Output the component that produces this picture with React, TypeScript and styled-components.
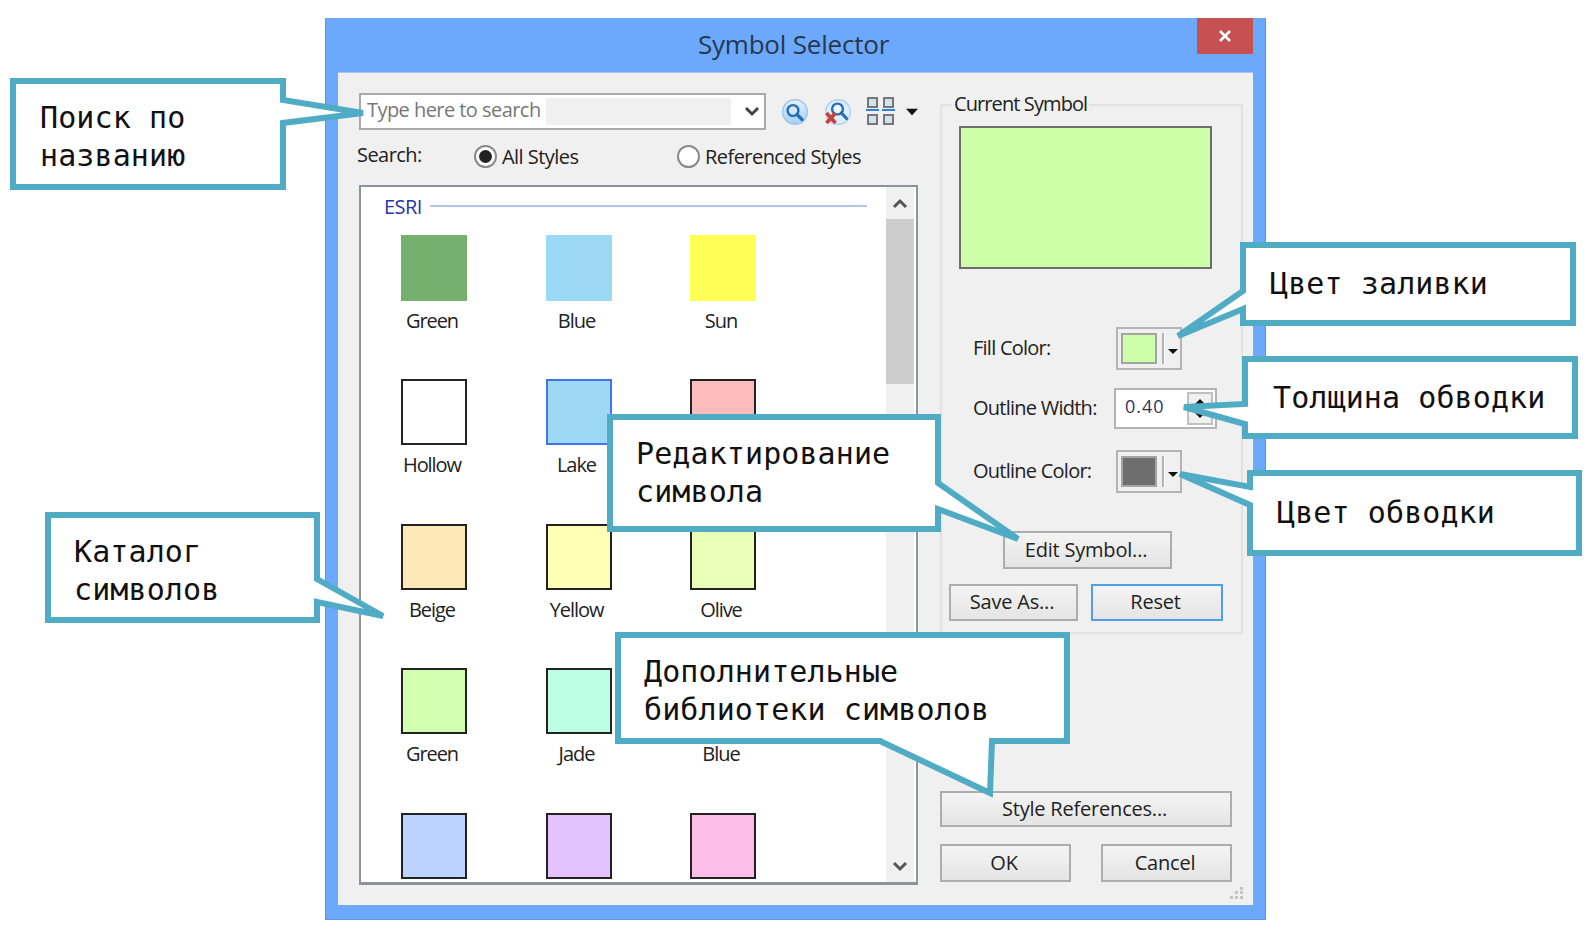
import React from 'react';
import styled, { createGlobalStyle } from 'styled-components';

const GlobalStyle = createGlobalStyle`
  html, body {
    margin: 0;
    padding: 0;
    background: #fff;
    overflow: hidden;
  }
  * {
    box-sizing: border-box;
  }
`;

const UI_FONT = `"Open Sans", "Liberation Sans", sans-serif`;
const TEAL = '#50abc5';

const Page = styled.div`
  position: relative;
  width: 1596px;
  height: 938px;
  padding: 18px 0 0 325px;
  background: #fff;
  font-family: ${UI_FONT};
  font-size: 20px;
  letter-spacing: -0.55px;
  color: #222;
`;

const Win = styled.div`
  width: 941px;
  height: 902px;
  display: flex;
  flex-direction: column;
  background: #6ca8fb;
  border: 1px solid #5f94dc;
  border-top: 0;
`;

const TitleBar = styled.div`
  position: relative;
  height: 54px;
  flex: none;
  padding: 8px 4px 0 0;
  text-align: center;
  font-size: 26px;
  line-height: 36px;
  letter-spacing: -0.2px;
  color: #26384f;
`;

const CloseBtn = styled.div`
  position: absolute;
  top: 0;
  right: 12px;
  width: 56px;
  height: 36px;
  display: flex;
  align-items: center;
  justify-content: center;
  background: #c75050;
`;

const Panel = styled.div`
  position: relative;
  flex: 1;
  min-height: 0;
  margin: 0 12px 14px 12px;
  padding: 20px 0 20px 21px;
  display: flex;
  gap: 22px;
  background: #f0f0f0;
  border-top: 1px solid #a9c4ea;
`;

const LeftCol = styled.div`
  width: 559px;
  min-height: 0;
  display: flex;
  flex-direction: column;
`;

const RightCol = styled.div`
  width: 295px;
  min-height: 0;
  display: flex;
  flex-direction: column;
`;

const SearchRow = styled.div`
  height: 37px;
  flex: none;
  display: flex;
  align-items: center;
`;

const Combo = styled.div`
  width: 407px;
  height: 37px;
  flex: none;
  display: flex;
  align-items: center;
  padding: 3px 0 3px 3px;
  background: #fff;
  border: 2px solid #a9a9a9;
  margin-right: 16px;
  color: #777;
`;

const ComboText = styled.div`
  width: 182px;
  height: 100%;
  padding-left: 3px;
  line-height: 24px;
  white-space: nowrap;
`;

const ComboFill = styled.div`
  width: 185px;
  height: 100%;
  background: #f0f0f0;
`;

const ComboArrow = styled.div`
  flex: 1;
  display: flex;
  justify-content: center;
  padding-left: 8px;
`;

const ToolIcon = styled.div<{ $gap: number }>`
  display: flex;
  margin-right: ${(p) => p.$gap}px;
`;

const RadioRow = styled.div`
  height: 55px;
  flex: none;
  padding-bottom: 2px;
  display: flex;
  align-items: center;
`;

const SearchLabel = styled.div`
  width: 117px;
  margin-left: -2px;
  margin-top: -4px;
`;

const RadioItem = styled.div<{ $width: number }>`
  width: ${(p) => p.$width}px;
  flex: none;
  display: flex;
  align-items: center;
  gap: 5px;
  white-space: nowrap;
`;

const RadioDot = styled.div<{ $on?: boolean }>`
  width: 23px;
  height: 23px;
  flex: none;
  display: flex;
  align-items: center;
  justify-content: center;
  border-radius: 50%;
  background: #fff;
  border: 2px solid #8a8a8a;
  &::after {
    content: '';
    width: 13px;
    height: 13px;
    border-radius: 50%;
    background: ${(p) => (p.$on ? '#222' : 'transparent')};
  }
`;

const ListBox = styled.div`
  flex: 1;
  min-height: 0;
  display: flex;
  overflow: hidden;
  background: #fff;
  border: 2px solid #8d929c;
  border-bottom-width: 3px;
`;

const ListBody = styled.div`
  flex: 1;
  overflow: hidden;
`;

const GroupHead = styled.div`
  height: 38px;
  display: flex;
  align-items: center;
  gap: 8px;
  padding: 0 19px 0 23px;
  color: #2436a8;
`;

const GroupRule = styled.div`
  flex: 1;
  height: 2px;
  background: #b5c4ef;
`;

const SymbolGrid = styled.div`
  display: grid;
  grid-template-columns: repeat(3, 144.5px);
  grid-auto-rows: 144.5px;
  padding: 9.5px 0 0 40px;
`;

const SymbolCell = styled.div`
  width: 66px;
  display: flex;
  flex-direction: column;
  align-items: center;
`;

const Swatch = styled.div<{ $fill: string; $edge: string }>`
  width: 66px;
  height: 66px;
  flex: none;
  background: ${(p) => p.$fill};
  border: 2px solid ${(p) => p.$edge};
`;

const SymbolName = styled.div`
  margin: 7px 4px 0 0;
  line-height: 25px;
  letter-spacing: -1.05px;
  white-space: nowrap;
`;

const ScrollBar = styled.div`
  width: 28px;
  flex: none;
  margin-right: 2px;
  display: flex;
  flex-direction: column;
  background: #f0f0f0;
`;

const ScrollArrow = styled.div`
  height: 32px;
  flex: none;
  display: flex;
  align-items: center;
  justify-content: center;
`;

const ScrollThumb = styled.div`
  height: 165px;
  flex: none;
  background: #cdcdcd;
`;

const ScrollTrack = styled.div`
  flex: 1;
`;

const Group = styled.fieldset`
  margin: 0;
  width: 295px;
  height: 541px;
  flex: none;
  padding: 9px 18px 11px 17px;
  display: flex;
  flex-direction: column;
  border: 2px solid #e2e2e2;
  legend {
    margin-left: -7px;
    padding: 0 2px;
    height: 24px;
    line-height: 22px;
    letter-spacing: -0.9px;
  }
`;

const Preview = styled.div`
  width: 253px;
  height: 143px;
  flex: none;
  background: #ccffa8;
  border: 2px solid #6e6e6e;
`;

const FormRow = styled.div<{ $top: number }>`
  display: flex;
  align-items: center;
  margin-top: ${(p) => p.$top}px;
  padding-left: 14px;
`;

const FormLabel = styled.div`
  width: 141px;
  flex: none;
  margin-top: -2px;
  letter-spacing: -0.75px;
`;

const ColorPicker = styled.div`
  width: 66px;
  height: 43px;
  margin-left: 2px;
  display: flex;
  align-items: center;
  padding-left: 3px;
  background: #f0f0f0;
  border: 2px solid #b4b4b4;
`;

const ColorChip = styled.div<{ $fill: string }>`
  width: 36px;
  height: 31px;
  background: ${(p) => p.$fill};
  border: 2px solid #a4a4a4;
`;

const ChipDivider = styled.div`
  width: 3px;
  height: 31px;
  margin-left: 5px;
  background: #b4b4b4;
  border-right: 1px solid #fff;
`;

const ChipCaret = styled.div`
  flex: 1;
  display: flex;
  justify-content: center;
  padding-top: 6px;
`;

const SpinInput = styled.div`
  width: 103px;
  height: 41px;
  display: flex;
  align-items: center;
  padding: 0 2px 0 9px;
  background: #fff;
  border: 2px solid #b4b4b4;
`;

const SpinValue = styled.div`
  flex: 1;
  margin-top: -6px;
  font-size: 18px;
  letter-spacing: 1px;
  color: #33335a;
`;

const SpinButtons = styled.div`
  width: 26px;
  height: 33px;
  display: flex;
  flex-direction: column;
  align-items: center;
  justify-content: space-between;
  padding: 5px 0;
  background: #f0f0f0;
  border: 2px solid #c0c0c0;
`;

const Btn = styled.div<{ $w: number; $h: number; $blue?: boolean }>`
  width: ${(p) => p.$w}px;
  height: ${(p) => p.$h}px;
  flex: none;
  display: flex;
  align-items: center;
  justify-content: center;
  background: linear-gradient(#f4f4f4, #e4e4e4);
  border: 2px solid ${(p) => (p.$blue ? '#4f9ee8' : '#adadad')};
  padding: 0 3px 2px 0;
  letter-spacing: -0.2px;
`;

const EditWrap = styled.div`
  margin: 38px 0 0 44px;
`;

const ActionRow = styled.div`
  display: flex;
  justify-content: space-between;
  width: 274px;
  margin: 15px 0 0 -10px;
`;

const BottomButtons = styled.div`
  margin-top: auto;
  margin-bottom: 3px;
  width: 292px;
  display: flex;
  flex-direction: column;
  gap: 17px;
`;

const OkRow = styled.div`
  display: flex;
  justify-content: space-between;
`;

const Grip = styled.svg`
  position: absolute;
  right: 9px;
  bottom: 5px;
`;

const Callout = styled.div<{ $x: number; $y: number; $w: number; $h: number; $pad: number; $lower: number }>`
  position: absolute;
  left: ${(p) => p.$x}px;
  top: ${(p) => p.$y}px;
  width: ${(p) => p.$w}px;
  height: ${(p) => p.$h}px;
  display: flex;
  align-items: center;
  padding: ${(p) => p.$lower}px 0 0 ${(p) => p.$pad}px;
  z-index: 2;
  svg {
    position: absolute;
    left: 0;
    top: 0;
    overflow: visible;
  }
`;

const CalloutText = styled.div`
  position: relative;
  font-family: "DejaVu Sans Mono", "Liberation Mono", monospace;
  font-size: 30px;
  line-height: 38px;
  letter-spacing: 0.1px;
  color: #111;
  white-space: pre;
`;

const Chevron = ({ up = false, color = '#555' }: { up?: boolean; color?: string }) => (
  <svg width="16" height="11" viewBox="0 0 16 11">
    <path d={up ? 'M2 9 L8 3 L14 9' : 'M2 2 L8 8 L14 2'} fill="none" stroke={color} strokeWidth="3" />
  </svg>
);

const Caret = ({ up = false, w = 10, h = 5 }: { up?: boolean; w?: number; h?: number }) => (
  <svg width={w} height={h} viewBox={`0 0 ${w} ${h}`}>
    <path d={up ? `M0 ${h} L${w / 2} 0 L${w} ${h} Z` : `M0 0 L${w} 0 L${w / 2} ${h} Z`} fill="#111" />
  </svg>
);

const SearchIcon = () => (
  <svg width="26" height="26" viewBox="0 0 26 26">
    <defs>
      <linearGradient id="glass" x1="0" y1="0" x2="0" y2="1">
        <stop offset="0" stopColor="#e4f1fc" />
        <stop offset="1" stopColor="#a2d0f6" />
      </linearGradient>
    </defs>
    <rect x="0.7" y="0.7" width="24.6" height="24.6" rx="12" fill="url(#glass)" stroke="#9cc6ec" strokeWidth="1.4" />
    <circle cx="11" cy="11.5" r="5.4" fill="#d2e8fa" stroke="#246eb4" strokeWidth="2.4" />
    <path d="M15 15.5 L20 20.5" stroke="#246eb4" strokeWidth="3.2" strokeLinecap="round" />
  </svg>
);

const ClearIcon = () => (
  <svg width="26" height="26" viewBox="0 0 26 26">
    <rect x="0.7" y="0.7" width="24.6" height="24.6" rx="12" fill="#dceefb" stroke="#aed0ee" strokeWidth="1.4" />
    <circle cx="12.5" cy="10" r="5.4" fill="#eef7fd" stroke="#246eb4" strokeWidth="2.4" />
    <path d="M16.5 14 L21.5 19.5" stroke="#246eb4" strokeWidth="3.2" strokeLinecap="round" />
    <path d="M1.5 14 L10.5 24 M10.5 14 L1.5 24" stroke="#c8403c" strokeWidth="3.6" />
  </svg>
);

const GridIcon = () => (
  <svg width="29" height="29" viewBox="0 0 29 29">
    {[1, 17].map((x) =>
      [0, 17].map((y) => (
        <g key={`${x}-${y}`}>
          <rect x={x + 1} y={y + 1} width="9" height="9" fill="#cfe3ee" stroke="#777" strokeWidth="2" />
          <rect x={x - 1} y={y + 12} width="13" height="2" fill="#2f7fdc" />
        </g>
      ))
    )}
  </svg>
);

type Point = [number, number];

// box outline with its tail; coordinates are those of the page
const CalloutNote = ({
  x,
  y,
  w,
  h,
  pad,
  lower = 0,
  tail,
  side,
  text,
}: {
  x: number;
  y: number;
  w: number;
  h: number;
  pad: number;
  lower?: number;
  tail: Point[];
  side: 'left' | 'right' | 'bottom';
  text: string;
}) => {
  const l = x + 3;
  const t = y + 3;
  const r = x + w - 3;
  const b = y + h - 3;
  let pts: Point[] = [];
  if (side === 'right') pts = [[l, t], [r, t], ...tail, [r, b], [l, b]];
  if (side === 'left') pts = [[l, t], [r, t], [r, b], [l, b], ...tail];
  if (side === 'bottom') pts = [[l, t], [r, t], [r, b], ...tail, [l, b]];
  return (
    <Callout $x={x} $y={y} $w={w} $h={h} $pad={pad} $lower={lower}>
      <svg width={w} height={h} viewBox={`${x} ${y} ${w} ${h}`}>
        <polygon
          points={pts.map((p) => p.join(',')).join(' ')}
          fill="#fff"
          stroke={TEAL}
          strokeWidth="6"
          strokeLinejoin="miter"
          strokeMiterlimit="3"
        />
      </svg>
      <CalloutText>{text}</CalloutText>
    </Callout>
  );
};

const symbols = [
  { name: 'Green', fill: '#76b06e', edge: '#76b06e' },
  { name: 'Blue', fill: '#9bd9f5', edge: '#9bd9f5' },
  { name: 'Sun', fill: '#ffff55', edge: '#ffff55' },
  { name: 'Hollow', fill: '#fff', edge: '#222' },
  { name: 'Lake', fill: '#9bd9f5', edge: '#4a72e8' },
  { name: '', fill: '#ffbcbc', edge: '#222' },
  { name: 'Beige', fill: '#fee8b8', edge: '#222' },
  { name: 'Yellow', fill: '#ffffb5', edge: '#222' },
  { name: 'Olive', fill: '#e8ffb5', edge: '#222' },
  { name: 'Green', fill: '#d2ffb0', edge: '#222' },
  { name: 'Jade', fill: '#bdffe5', edge: '#222' },
  { name: 'Blue', fill: '#b5e5ff', edge: '#222' },
  { name: '', fill: '#bcd2ff', edge: '#222' },
  { name: '', fill: '#e3c2ff', edge: '#222' },
  { name: '', fill: '#fcbde9', edge: '#222' },
];

export default function App() {
  return (
    <>
      <GlobalStyle />
      <Page>
        <Win>
          <TitleBar>
            Symbol Selector
            <CloseBtn>
              <svg width="14" height="14" viewBox="0 0 14 14">
                <path d="M2 2 L12 12 M12 2 L2 12" stroke="#fff" strokeWidth="2.6" />
              </svg>
            </CloseBtn>
          </TitleBar>
          <Panel>
            <LeftCol>
              <SearchRow>
                <Combo>
                  <ComboText>Type here to search</ComboText>
                  <ComboFill />
                  <ComboArrow>
                    <Chevron color="#444" />
                  </ComboArrow>
                </Combo>
                <ToolIcon $gap={17}>
                  <SearchIcon />
                </ToolIcon>
                <ToolIcon $gap={15}>
                  <ClearIcon />
                </ToolIcon>
                <ToolIcon $gap={11}>
                  <GridIcon />
                </ToolIcon>
                <Caret w={15} h={8} />
              </SearchRow>
              <RadioRow>
                <SearchLabel>Search:</SearchLabel>
                <RadioItem $width={203}>
                  <RadioDot $on />
                  All Styles
                </RadioItem>
                <RadioItem $width={210}>
                  <RadioDot />
                  Referenced Styles
                </RadioItem>
              </RadioRow>
              <ListBox>
                <ListBody>
                  <GroupHead>
                    ESRI
                    <GroupRule />
                  </GroupHead>
                  <SymbolGrid>
                    {symbols.map((s, i) => (
                      <SymbolCell key={i}>
                        <Swatch $fill={s.fill} $edge={s.edge} />
                        {s.name && <SymbolName>{s.name}</SymbolName>}
                      </SymbolCell>
                    ))}
                  </SymbolGrid>
                </ListBody>
                <ScrollBar>
                  <ScrollArrow>
                    <Chevron up />
                  </ScrollArrow>
                  <ScrollThumb />
                  <ScrollTrack />
                  <ScrollArrow>
                    <Chevron />
                  </ScrollArrow>
                </ScrollBar>
              </ListBox>
            </LeftCol>
            <RightCol>
              <Group>
                <legend>Current Symbol</legend>
                <Preview />
                <FormRow $top={58}>
                  <FormLabel>Fill Color:</FormLabel>
                  <ColorPicker>
                    <ColorChip $fill="#ccffa8" />
                    <ChipDivider />
                    <ChipCaret>
                      <Caret />
                    </ChipCaret>
                  </ColorPicker>
                </FormRow>
                <FormRow $top={18}>
                  <FormLabel>Outline Width:</FormLabel>
                  <SpinInput>
                    <SpinValue>0.40</SpinValue>
                    <SpinButtons>
                      <Caret up />
                      <Caret />
                    </SpinButtons>
                  </SpinInput>
                </FormRow>
                <FormRow $top={21}>
                  <FormLabel>Outline Color:</FormLabel>
                  <ColorPicker>
                    <ColorChip $fill="#6e6e6e" />
                    <ChipDivider />
                    <ChipCaret>
                      <Caret />
                    </ChipCaret>
                  </ColorPicker>
                </FormRow>
                <EditWrap>
                  <Btn $w={169} $h={38}>Edit Symbol...</Btn>
                </EditWrap>
                <ActionRow>
                  <Btn $w={129} $h={37}>Save As...</Btn>
                  <Btn $w={132} $h={37} $blue>Reset</Btn>
                </ActionRow>
              </Group>
              <BottomButtons>
                <Btn $w={292} $h={36}>Style References...</Btn>
                <OkRow>
                  <Btn $w={131} $h={38}>OK</Btn>
                  <Btn $w={131} $h={38}>Cancel</Btn>
                </OkRow>
              </BottomButtons>
            </RightCol>
            <Grip width="14" height="14" viewBox="0 0 14 14">
              <path d="M10 1h3v3h-3zM5 5h3v3H5zM10 5h3v3h-3zM0 10h3v3H0zM5 10h3v3H5zM10 10h3v3h-3z" fill="#c4c4c4" />
            </Grip>
          </Panel>
        </Win>

        <CalloutNote
          x={10}
          y={78}
          w={276}
          h={112}
          pad={30}
          lower={6}
          side="right"
          tail={[[283, 100], [363, 113], [283, 123]]}
          text={'Поиск по\nназванию'}
        />
        <CalloutNote
          x={45}
          y={512}
          w={275}
          h={111}
          pad={29}
          lower={6}
          side="right"
          tail={[[317, 579], [383, 616], [317, 602]]}
          text={'Каталог\nсимволов'}
        />
        <CalloutNote
          x={607}
          y={414}
          w={334}
          h={118}
          pad={29}
          side="right"
          tail={[[938, 483], [1018, 539], [938, 509]]}
          text={'Редактирование\nсимвола'}
        />
        <CalloutNote
          x={615}
          y={632}
          w={455}
          h={112}
          pad={29}
          lower={6}
          side="bottom"
          tail={[[992, 741], [990, 793], [880, 741]]}
          text={'Дополнительные\nбиблиотеки символов'}
        />
        <CalloutNote
          x={1240}
          y={242}
          w={336}
          h={84}
          pad={30}
          side="left"
          tail={[[1243, 309], [1178, 336], [1243, 291]]}
          text={'Цвет заливки'}
        />
        <CalloutNote
          x={1242}
          y={356}
          w={336}
          h={83}
          pad={31}
          side="left"
          tail={[[1245, 424], [1184, 407], [1245, 404]]}
          text={'Толщина обводки'}
        />
        <CalloutNote
          x={1247}
          y={470}
          w={335}
          h={86}
          pad={30}
          side="left"
          tail={[[1250, 505], [1180, 474], [1250, 487]]}
          text={'Цвет обводки'}
        />
      </Page>
    </>
  );
}
